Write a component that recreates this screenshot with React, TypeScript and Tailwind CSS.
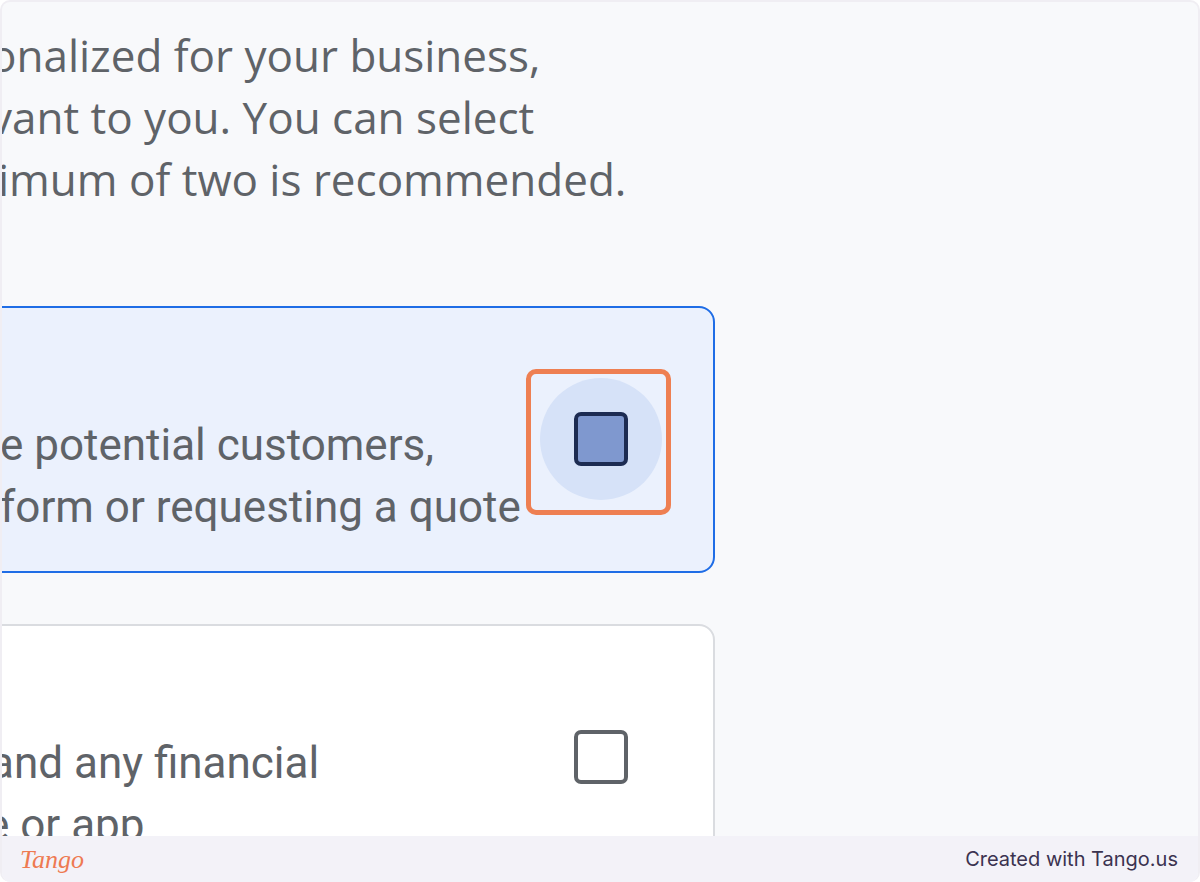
const headingFont = { fontFamily: '"Open Sans", "Noto Sans", sans-serif' };

function Checkbox({ active }: { active?: boolean }) {
  if (active) {
    return (
      <div className="relative mt-[70px] mr-[51px] shrink-0">
        <div className="flex h-[122px] w-[122px] items-center justify-center rounded-full bg-[#d6e2f8]">
          <div className="h-[54px] w-[54px] rounded-[7px] border-[4px] border-[#1c2b52] bg-[#7f98cf]" />
        </div>
        {/* tango highlight */}
        <div className="absolute -left-[14px] -top-[9px] h-[146px] w-[145px] rounded-[10px] border-[5px] border-[#ee7f52]" />
      </div>
    );
  }
  return (
    <div className="mt-[70px] mr-[51px] flex h-[122px] w-[122px] shrink-0 items-center justify-center">
      <div className="h-[54px] w-[54px] rounded-[7px] border-[4px] border-[#5f6368] bg-white" />
    </div>
  );
}

export default function App() {
  return (
    <div className="flex h-[882px] w-[1200px] flex-col overflow-hidden rounded-[10px] border-2 border-b-0 border-[#f0eef3] bg-[#f8f9fb]">
      <div className="flex-1 overflow-hidden">
        {/* intro copy */}
        <div
          className="mt-[22px] whitespace-nowrap text-[44px] leading-[62px] text-[#5f6368]"
          style={headingFont}
        >
          <div className="-ml-[12px]">onalized for your business,</div>
          <div className="-ml-[12px]">vant to you. You can select</div>
          <div className="-ml-[4px]">imum of two is recommended.</div>
        </div>

        {/* options */}
        <div className="mt-[96px] flex w-[713px] flex-col gap-[51px] font-['Roboto',sans-serif] text-[44px] leading-[62px] text-[#5f6368]">
          <div className="-ml-[40px] flex justify-between rounded-[16px] border-2 border-[#1f6de6] bg-[#ebf1fd]">
            <div className="whitespace-nowrap pb-[33px] pl-[38px] pt-[106px]">
              <div className="-ml-[2px]">e potential customers,</div>
              <div className="-ml-[2px]">form or requesting a quote</div>
            </div>
            <Checkbox active />
          </div>

          <div className="-ml-[40px] flex justify-between rounded-[16px] border-2 border-[#dadce0] bg-white">
            <div className="whitespace-nowrap pb-[33px] pl-[38px] pt-[106px]">
              <div className="-ml-[12px]">and any financial</div>
              <div className="-ml-[16px]">e or app</div>
            </div>
            <Checkbox />
          </div>
        </div>
      </div>

      {/* footer */}
      <div className="flex h-[46px] shrink-0 items-center justify-between bg-[#f3f2f8] pl-[18px] pr-[20px]">
        <span className="font-['Liberation_Serif',serif] text-[26px] font-light italic text-[#ee7a52]">
          Tango
        </span>
        <span className="font-['Inter',sans-serif] text-[20px] text-[#3b3350]">
          Created with Tango.us
        </span>
      </div>
    </div>
  );
}
